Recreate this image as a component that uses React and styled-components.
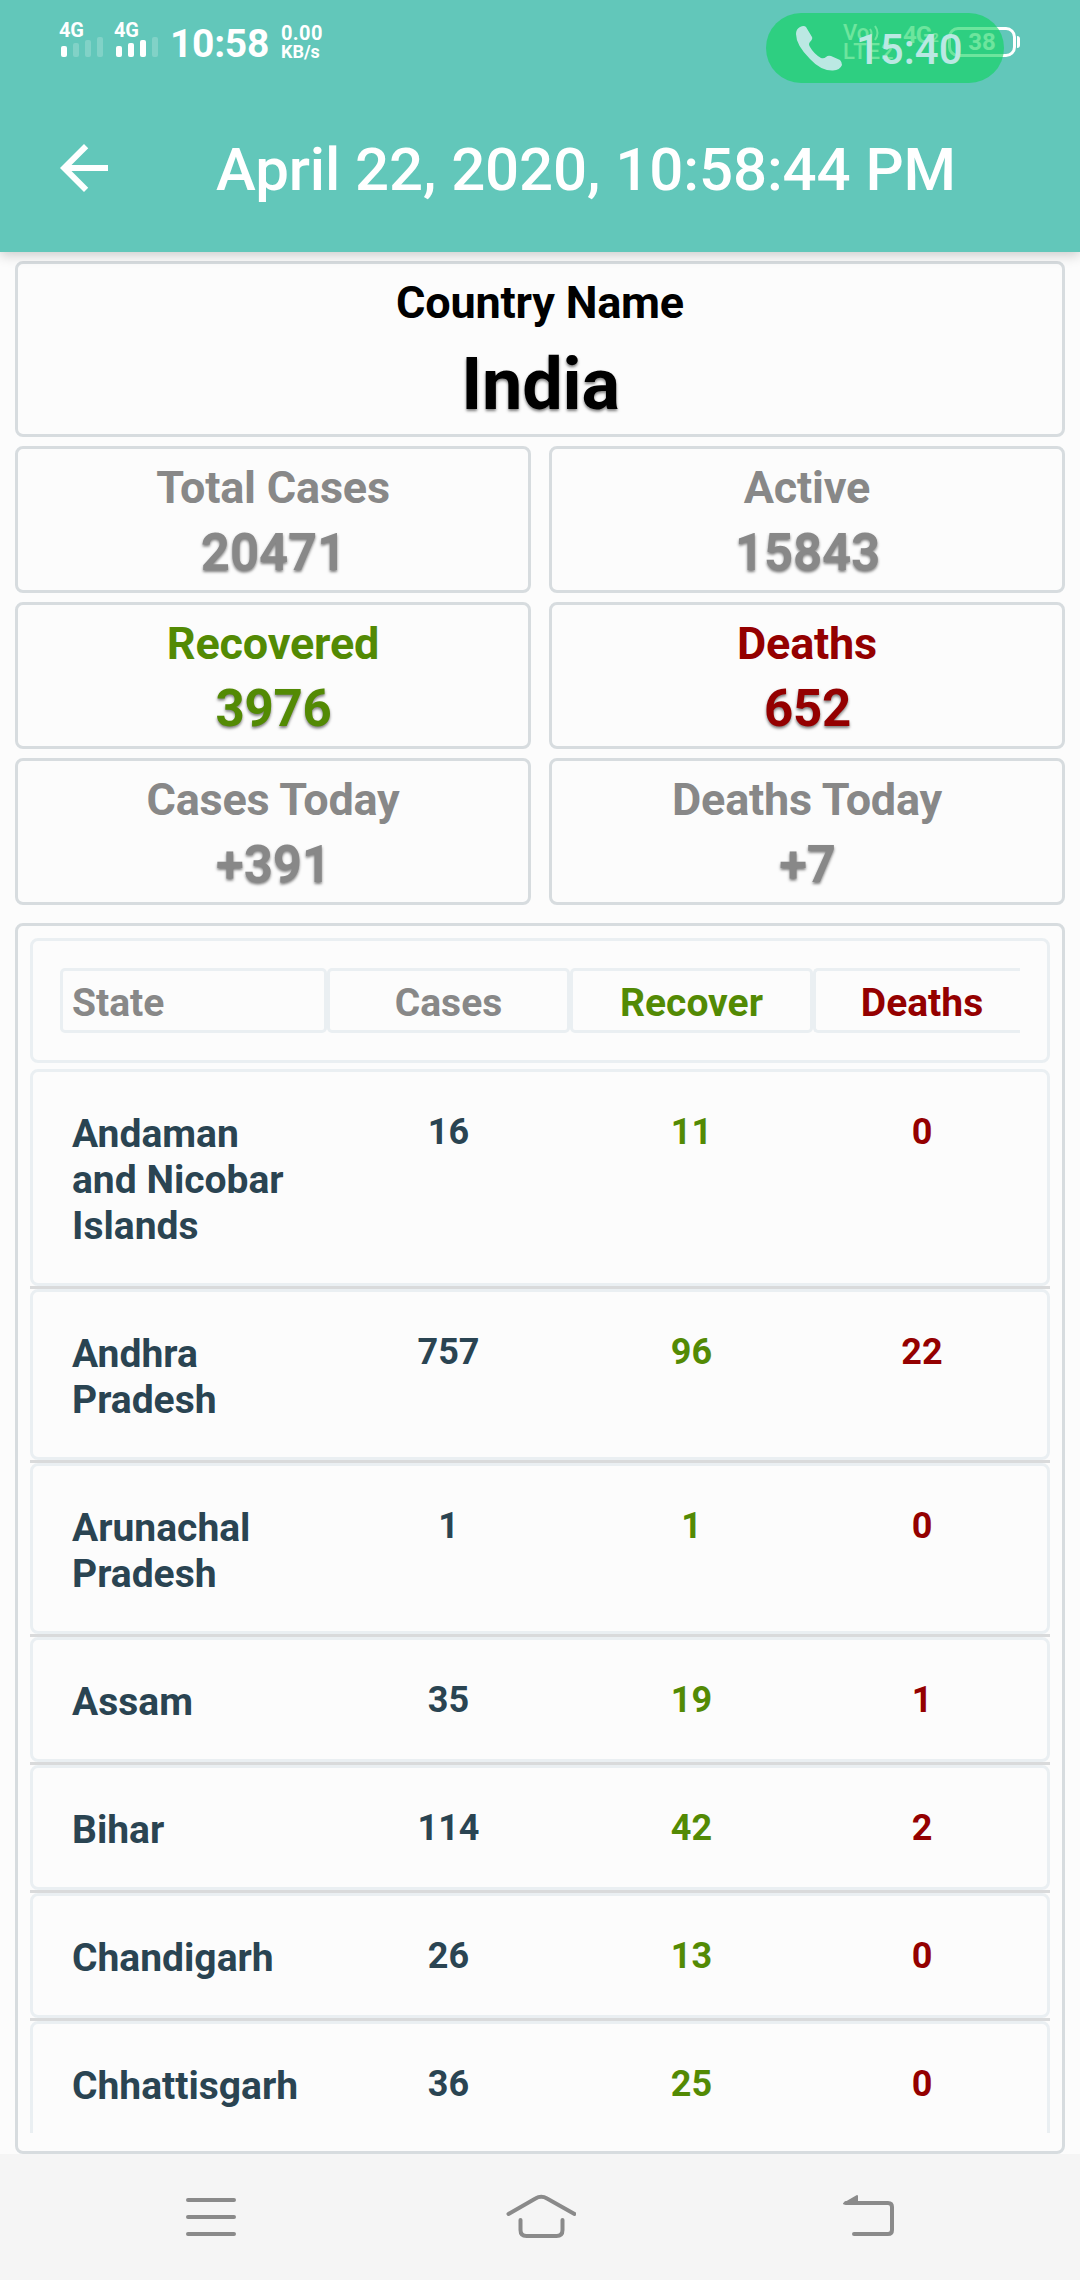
import React from "react";
import styled, { createGlobalStyle } from "styled-components";

const color = {
  teal: "#62c7ba",
  page: "#fcfcfc",
  border: "#d7dcdf",
  softBorder: "#eaeff2",
  divider: "#d9dadb",
  grey: "#888888",
  green: "#538a04",
  red: "#940000",
  slate: "#2a4452",
  black: "#000000",
};

const GlobalStyle = createGlobalStyle`
  * { box-sizing: border-box; }
  body {
    margin: 0;
    background: ${color.page};
    font-family: Roboto, "Liberation Sans", sans-serif;
  }
  svg { display: block; }
`;

const Screen = styled.div`
  width: 1080px;
  height: 2280px;
  display: flex;
  flex-direction: column;
  overflow: hidden;
  background: ${color.page};
`;

const Header = styled.header`
  position: relative;
  z-index: 1;
  flex: none;
  height: 252px;
  background: ${color.teal};
  color: #fff;
  box-shadow: 0 3px 12px rgba(0, 0, 0, 0.2);
`;

const StatusBar = styled.div`
  position: relative;
  height: 84px;
  padding: 22px 60px 0 59px;
  display: flex;
  align-items: flex-start;
`;

const Signal = styled.div`
  width: 55px;
  display: flex;
  flex-direction: column;
`;

const SignalLabel = styled.span`
  padding-top: 1px;
  font-size: 20px;
  line-height: 15px;
  font-weight: 700;
  letter-spacing: -0.3px;
`;

const Bars = styled.div`
  height: 19px;
  padding-left: 2px;
  display: flex;
  align-items: flex-end;
  gap: 6px;
`;

const Bar = styled.i`
  width: 6px;
  height: ${(p) => p.$height}px;
  border-radius: 2px;
  background: #fff;
  opacity: ${(p) => (p.$on ? 1 : 0.2)};
`;

const Clock = styled.span`
  width: 112px;
  padding-left: 1px;
  font-size: 39px;
  line-height: 45px;
  font-weight: 700;
  letter-spacing: -0.3px;
  white-space: nowrap;
`;

const Speed = styled.div`
  display: flex;
  flex-direction: column;
  font-weight: 700;
  font-size: 20px;
  line-height: 22px;
  letter-spacing: 0.4px;
  span + span {
    font-size: 18px;
    line-height: 16px;
    letter-spacing: 0;
  }
`;

const Radio = styled.div`
  margin-left: auto;
  display: flex;
  align-items: flex-start;
`;

const Volte = styled.div`
  width: 60px;
  padding-top: 1px;
  font-size: 22px;
  line-height: 18px;
  font-weight: 500;
`;

const VolteLine = styled.div`
  display: flex;
  align-items: center;
  height: 19px;
  letter-spacing: ${(p) => p.$tracking || 0}px;
`;

const DataType = styled.div`
  width: 45px;
  padding-top: 2px;
  display: flex;
  align-items: flex-end;
  font-size: 24px;
  line-height: 22px;
  font-weight: 700;
  letter-spacing: -1px;
  small {
    font-size: 13px;
    line-height: 16px;
  }
`;

const BatteryBody = styled.div`
  width: 68px;
  height: 30px;
  margin-top: 5px;
  border: 3px solid #fff;
  border-radius: 10px;
  display: flex;
  align-items: center;
  justify-content: center;
  font-size: 24px;
  line-height: 24px;
  font-weight: 700;
`;

const BatteryTip = styled.i`
  width: 3px;
  height: 12px;
  margin: 14px 0 0 1px;
  border-radius: 0 3px 3px 0;
  background: #fff;
`;

const CallPill = styled.div`
  position: absolute;
  top: 13px;
  left: 766px;
  width: 238px;
  height: 70px;
  padding: 2px 0 0 30px;
  border-radius: 35px;
  background: rgba(11, 212, 92, 0.6);
  display: flex;
  align-items: center;
  gap: 14px;
  color: #bbe8e3;
  font-size: 42px;
  line-height: 49px;
  font-weight: 500;
  svg { margin-top: -3px; }
`;

const Toolbar = styled.div`
  height: 168px;
  padding-left: 48px;
  display: flex;
  align-items: center;
`;

const Title = styled.h1`
  margin: 4px 0 0 96px;
  font-size: 60px;
  line-height: 70px;
  font-weight: 550;
  letter-spacing: -0.11px;
  white-space: nowrap;
`;

const Main = styled.main`
  flex: none;
  height: 1902px;
  padding: 9px 15px 0;
`;

const Card = styled.section`
  height: ${(p) => p.$height || 147}px;
  padding-top: 12px;
  border: 3px solid ${color.border};
  border-radius: 8px;
  display: flex;
  flex-direction: column;
  align-items: center;
  color: ${(p) => color[p.$tone]};
`;

const CardLabel = styled.div`
  font-size: 45px;
  line-height: 53px;
  font-weight: 700;
  letter-spacing: -0.2px;
`;

const CardValue = styled.div`
  margin-top: ${(p) => (p.$large ? 12 : 7)}px;
  padding-left: 1px;
  font-size: ${(p) => (p.$large ? 72 : 51)}px;
  line-height: ${(p) => (p.$large ? 88 : 63)}px;
  font-weight: 700;
  letter-spacing: -0.2px;
  text-shadow: 0 2px 3px rgba(0, 0, 0, 0.5);
`;

const StatGrid = styled.div`
  margin-top: 9px;
  display: grid;
  grid-template-columns: 1fr 1fr;
  gap: 9px 18px;
`;

const Panel = styled.section`
  height: 1231px;
  margin-top: 18px;
  padding: 12px;
  border: 3px solid ${color.border};
  border-radius: 8px;
`;

const RowBox = styled.div`
  padding: 27px;
  border: 3px solid ${color.softBorder};
  border-radius: 8px;
`;

const HeadRow = styled(RowBox)`
  height: 125px;
`;

const Columns = styled.div`
  display: grid;
  grid-template-columns: 267px 243px 243px 218px;
  overflow: hidden;
`;

const Cell = styled.div`
  padding: 12px ${(p) => (p.$left ? 20 : 12)}px 7px 12px;
  color: ${(p) => color[p.$tone]};
  font-size: ${(p) => (p.$digits ? 36 : 39)}px;
  line-height: ${(p) => (p.$digits ? 42 : 46)}px;
  font-weight: 700;
  text-align: ${(p) => (p.$left ? "left" : "center")};
`;

const HeadCell = styled(Cell)`
  height: 65px;
  padding: 9px ${(p) => (p.$open ? 12 : 9)}px 0 9px;
  border: 3px solid ${color.softBorder};
  border-radius: 5px;
  ${(p) => p.$open && "border-right: 0; border-radius: 5px 0 0 5px;"}
`;

const List = styled.div`
  height: 1064px;
  margin-top: 6px;
  overflow: hidden;
`;

const Divider = styled.div`
  height: 3px;
  background: ${color.divider};
`;

const NavBar = styled.nav`
  flex: none;
  height: 126px;
  padding: 36px 186px 0;
  background: #f5f5f5;
  display: flex;
  justify-content: space-between;
  svg {
    fill: none;
    stroke: #8a8a8a;
    stroke-width: 4;
    stroke-linecap: round;
    stroke-linejoin: round;
  }
`;

const ArrowHead = styled.path`
  fill: #8a8a8a;
  stroke-width: 2;
`;

const stats = [
  ["Total Cases", "20471", "grey"],
  ["Active", "15843", "grey"],
  ["Recovered", "3976", "green"],
  ["Deaths", "652", "red"],
  ["Cases Today", "+391", "grey"],
  ["Deaths Today", "+7", "grey"],
];

const states = [
  ["Andaman and Nicobar Islands", 16, 11, 0],
  ["Andhra Pradesh", 757, 96, 22],
  ["Arunachal Pradesh", 1, 1, 0],
  ["Assam", 35, 19, 1],
  ["Bihar", 114, 42, 2],
  ["Chandigarh", 26, 13, 0],
  ["Chhattisgarh", 36, 25, 0],
];

function SignalMeter({ level }) {
  return (
    <Signal>
      <SignalLabel>4G</SignalLabel>
      <Bars>
        {[11, 14, 17, 20].map((h, i) => (
          <Bar key={h} $height={h} $on={i < level} />
        ))}
      </Bars>
    </Signal>
  );
}

function Status() {
  return (
    <StatusBar>
      <SignalMeter level={1} />
      <SignalMeter level={3} />
      <Clock>10:58</Clock>
      <Speed>
        <span>0.00</span>
        <span>KB/s</span>
      </Speed>
      <Radio>
        <Volte>
          <VolteLine>
            Vo
            <svg width="12" height="18" viewBox="0 0 12 18" fill="none" stroke="#fff" strokeWidth="2">
              <path d="M1 5q3 4 0 9M6 2q5 7 0 14" />
            </svg>
          </VolteLine>
          <VolteLine $tracking={1}>LTE2</VolteLine>
        </Volte>
        <DataType>
          4G<small>2</small>
        </DataType>
        <BatteryBody>38</BatteryBody>
        <BatteryTip />
      </Radio>
      <CallPill>
        <svg width="46" height="46" viewBox="0 0 46 46" fill="currentColor">
          <path d="M4 2Q8 0 10 2L16 12Q17 14 14 17Q12 19 14 22Q18 29 25 33Q28 34 30 32Q32 30 35 31L44 35Q46 37 46 40Q44 45 37 45.500Q25 46 14 34Q0 20 0 9Q0 4 4 2Z" />
        </svg>
        15:40
      </CallPill>
    </StatusBar>
  );
}

export default function App() {
  return (
    <Screen>
      <GlobalStyle />
      <Header>
        <Status />
        <Toolbar>
          <svg width="72" height="72" viewBox="0 0 24 24" fill="#fff">
            <path d="M20 11H7.830l5.590-5.590L12 4l-8 8 8 8 1.410-1.410L7.830 13H20v-2z" />
          </svg>
          <Title>April 22, 2020, 10:58:44 PM</Title>
        </Toolbar>
      </Header>
      <Main>
        <Card $height={176} $tone="black">
          <CardLabel>Country Name</CardLabel>
          <CardValue $large>India</CardValue>
        </Card>
        <StatGrid>
          {stats.map(([label, value, tone]) => (
            <Card key={label} $tone={tone}>
              <CardLabel>{label}</CardLabel>
              <CardValue>{value}</CardValue>
            </Card>
          ))}
        </StatGrid>
        <Panel>
          <HeadRow>
            <Columns>
              <HeadCell $left $tone="grey">State</HeadCell>
              <HeadCell $tone="grey">Cases</HeadCell>
              <HeadCell $tone="green">Recover</HeadCell>
              <HeadCell $tone="red" $open>Deaths</HeadCell>
            </Columns>
          </HeadRow>
          <List>
            {states.map(([name, cases, recovered, deaths], i) => (
              <React.Fragment key={name}>
                {i > 0 && <Divider />}
                <RowBox>
                  <Columns>
                    <Cell $left $tone="slate">{name}</Cell>
                    <Cell $digits $tone="slate">{cases}</Cell>
                    <Cell $digits $tone="green">{recovered}</Cell>
                    <Cell $digits $tone="red">{deaths}</Cell>
                  </Columns>
                </RowBox>
              </React.Fragment>
            ))}
          </List>
        </Panel>
      </Main>
      <NavBar>
        <svg width="50" height="50" viewBox="0 0 50 50">
          <path d="M2 10H48M2 27H48M2 44H48" />
        </svg>
        <svg width="72" height="50" viewBox="0 0 72 50">
          <path d="M4.500 24L31.500 8.500Q37.200 5 43 8.500L70.500 24" />
          <path d="M16.500 30V40Q16.500 46 22.500 46H52.500Q58.500 46 58.500 40V30" />
        </svg>
        <svg width="51" height="50" viewBox="0 0 51 50">
          <path d="M3 13H45Q49 13 49 17V40Q49 44 45 44H11" />
          <ArrowHead d="M1 13.500L14 6V13.500Z" />
        </svg>
      </NavBar>
    </Screen>
  );
}
